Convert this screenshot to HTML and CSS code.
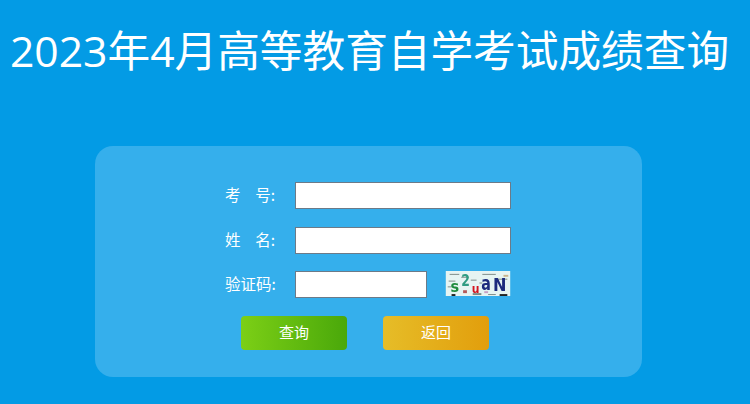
FILE: index.html
```html
<!DOCTYPE html>
<html lang="zh-CN">
<head>
    <meta charset="UTF-8">
    <title>2023年4月高等教育自学考试成绩查询</title>
    <link rel="stylesheet" href="styles.css">
</head>
<body>
    <h1 class="title">2023年4月高等教育自学考试成绩查询</h1>

    <div class="panel">
        <div class="row">
            <label class="label">考&ensp;&nbsp;&nbsp;号:</label>
            <input type="text" class="input">
        </div>
        <div class="row row-name">
            <label class="label">姓&ensp;&nbsp;&nbsp;名:</label>
            <input type="text" class="input">
        </div>
        <div class="row row-code">
            <label class="label">验证码:</label>
            <input type="text" class="input input-code">
            <svg class="captcha" width="66" height="25" viewBox="0 0 67 26">
                <rect width="67" height="26" fill="#e6f4f2"/>
                <g fill="#7d8a86">
                    <rect x="4" y="3" width="10" height="1"/>
                    <rect x="16" y="6" width="8" height="1"/>
                    <rect x="38" y="3" width="14" height="1"/>
                    <rect x="52" y="8" width="12" height="1"/>
                    <rect x="3" y="10" width="7" height="1"/>
                    <rect x="26" y="9" width="6" height="1"/>
                    <rect x="28" y="23" width="9" height="2"/>
                    <rect x="44" y="24" width="8" height="1"/>
                    <rect x="2" y="16" width="4" height="1"/>
                    <rect x="35" y="12" width="3" height="1"/>
                </g>
                <g fill="#222">
                    <rect x="6" y="24" width="4" height="2"/>
                    <rect x="56" y="24" width="8" height="2"/>
                </g>
                <rect x="18" y="20" width="4" height="3" fill="#b45a5a"/>
                <rect x="40" y="21" width="4" height="2" fill="#c9a0c4"/>
                <rect x="60" y="4" width="5" height="2" fill="#c8b48c"/>
                <text class="captcha-char" x="5" y="22" fill="#1e8a3c" font-size="17" textLength="9" lengthAdjust="spacingAndGlyphs">s</text>
                <text class="captcha-char" x="16" y="16" fill="#2f9c82" font-size="17" textLength="9" lengthAdjust="spacingAndGlyphs">2</text>
                <text class="captcha-char" x="27" y="23" fill="#d4141e" font-size="12" textLength="8" lengthAdjust="spacingAndGlyphs">u</text>
                <text class="captcha-char" x="37" y="20" fill="#1c2a7c" font-size="20" textLength="10" lengthAdjust="spacingAndGlyphs">a</text>
                <text class="captcha-char" x="49" y="21" fill="#1c2a7c" font-size="19" textLength="14" lengthAdjust="spacingAndGlyphs">N</text>
            </svg>
        </div>
        <div class="buttons">
            <button class="btn btn-query">查询</button>
            <button class="btn btn-back">返回</button>
        </div>
    </div>
</body>
</html>
```

FILE: styles.css
```css
* {
    margin: 0;
    padding: 0;
    box-sizing: border-box;
}

body {
    height: 100vh;
    overflow: hidden;
    background-color: #039be5;
    color: white;
    font-family: "Noto Sans CJK SC", "Noto Sans", sans-serif;
}

/* 标题 */
.title {
    height: 146px;
    padding: 20px 11px 0 0;
    font-family: "Open Sans", "Noto Sans CJK SC", sans-serif;
    font-size: 42.67px;
    font-weight: normal;
    line-height: 62px;
    text-align: center;
    white-space: nowrap;
}

/* 查询面板 */
.panel {
    width: 547px;
    height: 231px;
    margin-left: 95px;
    padding: 36px 0 0 130px;
    background-color: #35afec;
    border-radius: 18px;
}

.row {
    display: flex;
    align-items: center;
    height: 27px;
}

.row-name {
    margin-top: 18px;
}

.row-code {
    margin-top: 17px;
}

.label {
    width: 70px;
    padding-bottom: 3px;
    font-size: 15.5px;
}

.input {
    width: 216px;
    height: 27px;
    background-color: white;
    border: 1px solid #6c7a88;
    outline: none;
}

.input-code {
    width: 132px;
}

.captcha {
    margin: 0 0 2px 18px;
    filter: blur(0.3px);
}

.captcha-char {
    font-family: "DejaVu Sans", sans-serif;
    font-weight: bold;
}

.buttons {
    display: flex;
    gap: 36px;
    margin: 18px 0 0 16px;
}

.btn {
    width: 106px;
    height: 34px;
    padding-bottom: 4px;
    border: none;
    border-radius: 4px;
    color: white;
    font-family: "Noto Sans CJK SC", sans-serif;
    font-size: 15px;
}

.btn-query {
    background: linear-gradient(to right, #7ccf16, #4aa80a);
}

.btn-back {
    background: linear-gradient(to right, #e6bd28, #e29e0c);
}
```
